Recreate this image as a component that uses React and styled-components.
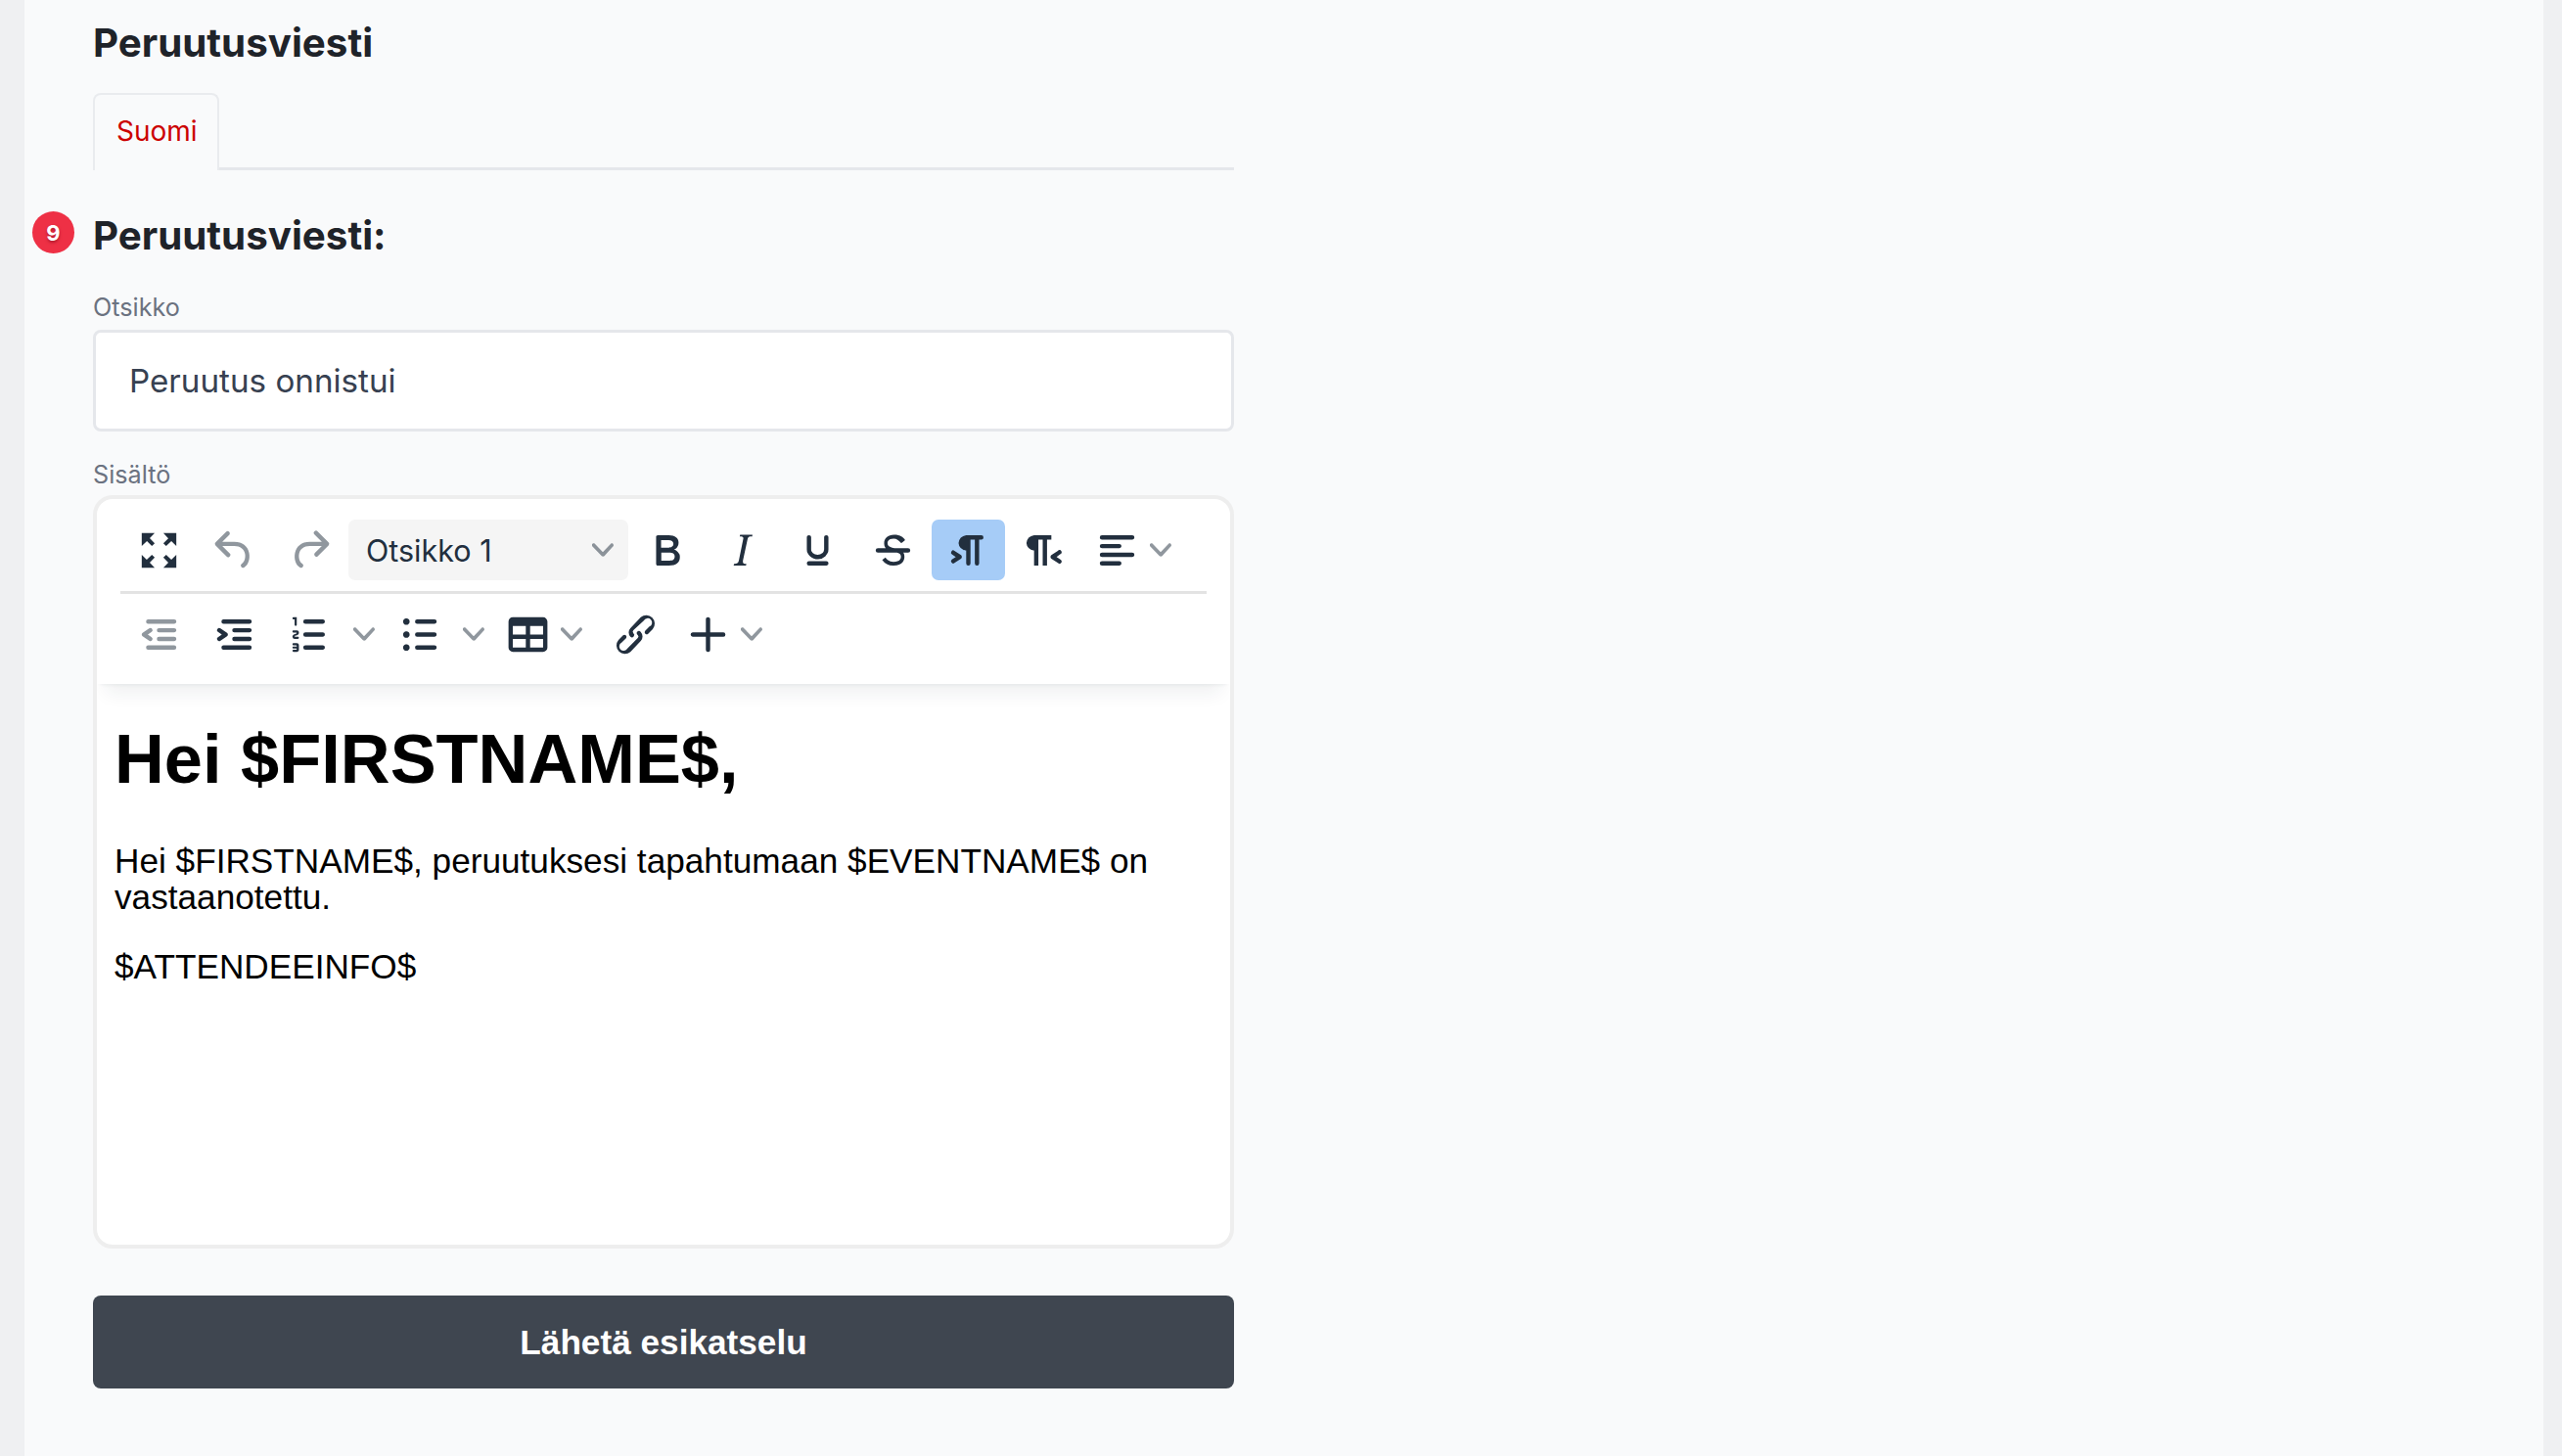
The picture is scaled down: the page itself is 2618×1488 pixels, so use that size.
import React from "react";
import styled, { createGlobalStyle } from "styled-components";

const icons = {
  fullscreen:
    "M15.3 10l-1.3-1.3 2.3-2.3L14 4h6v6l-2.3-2.3-2.4 2.3zm-6.6 0L6.4 7.7 4 10V4h6L7.7 6.3 10 8.7 8.7 10zm6.6 4l2.4 2.3L20 14v6h-6l2.3-2.3-2.3-2.4 1.3-1.3zm-6.6 0L10 15.3l-2.3 2.4L10 20H4v-6l2.3 2.3L8.7 14z",
  undo: "M6.4 8H12c3.7 0 6.2 2 6.8 5.1.6 2.7-.4 5.6-2.3 6.8a1 1 0 0 1-1-1.8c1.1-.6 1.8-2.7 1.4-4.6-.5-2.1-2.1-3.5-4.9-3.5H6.4l3.3 3.3a1 1 0 1 1-1.4 1.4l-5-5a1 1 0 0 1 0-1.4l5-5a1 1 0 0 1 1.4 1.4L6.4 8z",
  redo: "M17.6 10H12c-2.8 0-4.4 1.4-4.9 3.5-.4 2 .3 4 1.4 4.6a1 1 0 1 1-1 1.8c-2-1.2-2.9-4.1-2.3-6.8.6-3 3-5.1 6.8-5.1h5.6l-3.3-3.3a1 1 0 1 1 1.4-1.4l5 5a1 1 0 0 1 0 1.4l-5 5a1 1 0 0 1-1.4-1.4l3.3-3.3z",
  bold: "M7.8 19c-.3 0-.5 0-.6-.2l-.2-.5V5.7c0-.2 0-.4.2-.5l.6-.2h5c1.5 0 2.7.3 3.5 1 .7.6 1.1 1.4 1.1 2.5a3 3 0 0 1-.6 1.9c-.4.6-1 1-1.6 1.2.4.1.9.3 1.3.6s.8.7 1 1.2c.4.4.5 1 .5 1.6 0 1.3-.4 2.3-1.3 3-.8.7-2.1 1-3.8 1H7.8zm5-8.3c.6 0 1.2-.1 1.6-.5.4-.3.6-.7.6-1.3 0-1.1-.8-1.7-2.3-1.7H9.3v3.5h3.4zm.5 6c.7 0 1.3-.1 1.7-.4.4-.4.6-.9.6-1.5s-.2-1-.7-1.4c-.4-.3-1-.4-2-.4H9.4v3.8h4z",
  italic:
    "M16.7 4.7l-.1.9h-.3c-.6 0-1 0-1.4.3-.3.3-.4.6-.5 1.1l-2.1 9.8v.6c0 .5.4.8 1.4.8h.2l-.2.8H8l.2-.8h.2c1.1 0 1.8-.5 2-1.5l2-9.8.1-.5c0-.6-.4-.8-1.4-.8h-.3l.2-.9h5.8z",
  underline:
    "M16 5c.6 0 1 .4 1 1v5.5a4 4 0 0 1-.4 1.8l-1 1.4a5.3 5.3 0 0 1-5.5 1 5 5 0 0 1-1.6-1c-.5-.4-.8-.9-1.1-1.4a4 4 0 0 1-.4-1.8V6c0-.6.4-1 1-1s1 .4 1 1v5.5c0 .3 0 .6.2 1l.6.7a3.3 3.3 0 0 0 2.2.8 3.4 3.4 0 0 0 2.2-.8c.3-.2.4-.5.6-.8l.2-.9V6c0-.6.4-1 1-1zM8 17h8c.6 0 1 .4 1 1s-.4 1-1 1H8a1 1 0 0 1 0-2z",
  strike:
    "M15.6 8.5c-.5-.7-1-1.1-1.3-1.3-.6-.4-1.3-.6-2-.6-2.7 0-2.8 1.7-2.8 2.1 0 1.6 1.8 2 3.2 2.3 4.4.9 4.6 2.8 4.6 3.9 0 1.4-.7 4.1-5 4.1A6.2 6.2 0 0 1 7 16.4l1.5-1.1c.4.6 1.6 2 3.7 2 1.6 0 2.5-.4 3-1 .3-.4.5-.9.5-1.4 0-.9-.4-1.7-3.2-2.2-2-.4-4.6-1-4.6-4 0-2.3 1.7-3.9 4.6-3.9 1.5 0 2.6.3 3.4.8.8.5 1.3 1 1.7 1.6l-1.5 1.3zM5 11h14a1 1 0 0 1 0 2H5a1 1 0 0 1 0-2z",
  ltr: "M11 5h7a1 1 0 0 1 0 2h-1v11a1 1 0 0 1-2 0V7h-2v11a1 1 0 0 1-2 0v-6c-.5 0-1 0-1.4-.3A3.4 3.4 0 0 1 7.8 10a3.3 3.3 0 0 1 0-2.8 3.4 3.4 0 0 1 1.8-1.8L11 5zM4.4 16.2L6.2 15l-1.8-1.2a1 1 0 0 1 1.2-1.6l3 2a1 1 0 0 1 0 1.6l-3 2a1 1 0 1 1-1.2-1.6z",
  rtl: "M8 5h8v2h-2v12h-2V7h-2v12H8v-7c-.5 0-1 0-1.4-.3A3.4 3.4 0 0 1 4.8 10a3.3 3.3 0 0 1 0-2.8 3.4 3.4 0 0 1 1.8-1.8L8 5zm12 11.2a1 1 0 1 1-1 1.6l-3-2a1 1 0 0 1 0-1.6l3-2a1 1 0 1 1 1 1.6L18.4 15l1.8 1.2z",
  alignLeft:
    "M5 5h14c.6 0 1 .4 1 1s-.4 1-1 1H5a1 1 0 1 1 0-2zm0 4h8c.6 0 1 .4 1 1s-.4 1-1 1H5a1 1 0 1 1 0-2zm0 8h8c.6 0 1 .4 1 1s-.4 1-1 1H5a1 1 0 0 1 0-2zm0-4h14c.6 0 1 .4 1 1s-.4 1-1 1H5a1 1 0 0 1 0-2z",
  outdent:
    "M7 5h12c.6 0 1 .4 1 1s-.4 1-1 1H7a1 1 0 1 1 0-2zm5 4h7c.6 0 1 .4 1 1s-.4 1-1 1h-7a1 1 0 0 1 0-2zm0 4h7c.6 0 1 .4 1 1s-.4 1-1 1h-7a1 1 0 0 1 0-2zm-5 4h12a1 1 0 0 1 0 2H7a1 1 0 0 1 0-2zm1.6-3.8a1 1 0 0 1-1.2 1.6l-3-2a1 1 0 0 1 0-1.6l3-2a1 1 0 0 1 1.2 1.6L6.8 12l1.8 1.2z",
  indent:
    "M7 5h12c.6 0 1 .4 1 1s-.4 1-1 1H7a1 1 0 1 1 0-2zm5 4h7c.6 0 1 .4 1 1s-.4 1-1 1h-7a1 1 0 0 1 0-2zm0 4h7c.6 0 1 .4 1 1s-.4 1-1 1h-7a1 1 0 0 1 0-2zm-5 4h12a1 1 0 0 1 0 2H7a1 1 0 0 1 0-2zm-2.6-3.8L6.2 12l-1.8-1.2a1 1 0 0 1 1.2-1.6l3 2a1 1 0 0 1 0 1.6l-3 2a1 1 0 1 1-1.2-1.6z",
  numlist:
    "M10 17h8c.6 0 1 .4 1 1s-.4 1-1 1h-8a1 1 0 0 1 0-2zm0-6h8c.6 0 1 .4 1 1s-.4 1-1 1h-8a1 1 0 0 1 0-2zm0-6h8c.6 0 1 .4 1 1s-.4 1-1 1h-8a1 1 0 1 1 0-2zM6 4v3.5c0 .3-.2.5-.5.5a.5.5 0 0 1-.5-.5V5h-.5a.5.5 0 0 1 0-1H6zm-1 8.8l.2.2h1.3c.3 0 .5.2.5.5s-.2.5-.5.5H4.9a1 1 0 0 1-.9-1V13c0-.4.3-.8.6-1l1.2-.4.2-.3a.2.2 0 0 0-.2-.2H4.5a.5.5 0 0 1-.5-.5c0-.3.2-.5.5-.5h1.6c.5 0 .9.4.9 1v.1c0 .4-.3.8-.6 1l-1.2.4-.2.3zM7 17v2c0 .6-.4 1-1 1H4.5a.5.5 0 0 1 0-1h1.2c.2 0 .3-.1.3-.3 0-.2-.1-.3-.3-.3H4.4a.4.4 0 1 1 0-.8h1.3c.2 0 .3-.1.3-.3 0-.2-.1-.3-.3-.3H4.5a.5.5 0 1 1 0-1H6c.6 0 1 .4 1 1z",
  bullist:
    "M11 5h8c.6 0 1 .4 1 1s-.4 1-1 1h-8a1 1 0 0 1 0-2zm0 6h8c.6 0 1 .4 1 1s-.4 1-1 1h-8a1 1 0 0 1 0-2zm0 6h8c.6 0 1 .4 1 1s-.4 1-1 1h-8a1 1 0 0 1 0-2zM4.5 6c0-.4.1-.8.4-1 .3-.4.7-.5 1.1-.5.4 0 .8.1 1 .4.4.3.5.7.5 1.1 0 .4-.1.8-.4 1-.3.4-.7.5-1.1.5-.4 0-.8-.1-1-.4-.4-.3-.5-.7-.5-1.1zm0 6c0-.4.1-.8.4-1 .3-.4.7-.5 1.1-.5.4 0 .8.1 1 .4.4.3.5.7.5 1.1 0 .4-.1.8-.4 1-.3.4-.7.5-1.1.5-.4 0-.8-.1-1-.4-.4-.3-.5-.7-.5-1.1zm0 6c0-.4.1-.8.4-1 .3-.4.7-.5 1.1-.5.4 0 .8.1 1 .4.4.3.5.7.5 1.1 0 .4-.1.8-.4 1-.3.4-.7.5-1.1.5-.4 0-.8-.1-1-.4-.4-.3-.5-.7-.5-1.1z",
  table:
    "M19 4a2 2 0 0 1 2 2v12a2 2 0 0 1-2 2H5a2 2 0 0 1-2-2V6c0-1.1.9-2 2-2h14zM5 14v4h6v-4H5zm14 0h-6v4h6v-4zm0-6h-6v4h6V8zM5 12h6V8H5v4z",
  link: "M6.2 12.3a1 1 0 0 1 1.4 1.4l-2.1 2a2 2 0 1 0 2.7 2.7l4.8-4.8a1 1 0 0 0 0-1.4 1 1 0 1 1 1.4-1.3 2.9 2.9 0 0 1 0 4L9.6 20a3.9 3.9 0 0 1-5.5-5.5l2-2zm11.6-.6a1 1 0 0 1-1.4-1.4l2-2a2 2 0 1 0-2.6-2.7L11 10a1 1 0 0 0 0 1.4A1 1 0 1 1 9.6 13a2.9 2.9 0 0 1 0-4L14.4 4a3.9 3.9 0 0 1 5.5 5.5l-2 2z",
  plus: "M12 4c.5 0 1 .4 1 .9V11h6a1 1 0 0 1 .1 2H13v6a1 1 0 0 1-2 .1V13H5a1 1 0 0 1-.1-2H11V5c0-.6.4-1 1-1z",
};

const Icon = ({ name, muted }) => (
  <IconSvg viewBox="0 0 24 24" $muted={muted}>
    <path d={icons[name]} />
  </IconSvg>
);

const Chevron = () => (
  <ChevronSvg viewBox="0 0 10 10">
    <path d="M8.7 2.2c.3-.3.8-.3 1 0 .4.4.4.9 0 1.2L5.7 7.8c-.3.3-.9.3-1.2 0L.2 3.4a.8.8 0 0 1 0-1.2c.3-.3.8-.3 1.1 0L5 6l3.7-3.8z" />
  </ChevronSvg>
);

const App = () => {
  return (
    <>
      <GlobalStyle />
      <Panel>
        <Content>
          <PageTitle>Peruutusviesti</PageTitle>
          <Tabs>
            <Tab>Suomi</Tab>
          </Tabs>
          <SectionHeading>
            <Badge>9</Badge>
            Peruutusviesti:
          </SectionHeading>
          <FieldLabel>Otsikko</FieldLabel>
          <TextInput>Peruutus onnistui</TextInput>
          <EditorLabel>Sisältö</EditorLabel>
          <Editor>
            <Toolbar>
              <ToolRowTop>
                <ToolButton><Icon name="fullscreen" /></ToolButton>
                <ToolButton><Icon name="undo" muted /></ToolButton>
                <ToolButton><Icon name="redo" muted /></ToolButton>
                <FormatSelect>
                  Otsikko 1
                  <Chevron />
                </FormatSelect>
                <ToolButton><Icon name="bold" /></ToolButton>
                <ToolButton><Icon name="italic" /></ToolButton>
                <ToolButton><Icon name="underline" /></ToolButton>
                <ToolButton><Icon name="strike" /></ToolButton>
                <ToolButton $active $gap={1}><Icon name="ltr" /></ToolButton>
                <ToolButton><Icon name="rtl" /></ToolButton>
                <MenuButton>
                  <Icon name="alignLeft" />
                  <ChevronSlot><Chevron /></ChevronSlot>
                </MenuButton>
              </ToolRowTop>
              <ToolRow>
                <ToolButton><Icon name="outdent" muted /></ToolButton>
                <ToolButton><Icon name="indent" /></ToolButton>
                <SplitButton $width={112}>
                  <ToolButton><Icon name="numlist" /></ToolButton>
                  <ChevronSlot><Chevron /></ChevronSlot>
                </SplitButton>
                <SplitButton $width={112}>
                  <ToolButton><Icon name="bullist" /></ToolButton>
                  <ChevronSlot><Chevron /></ChevronSlot>
                </SplitButton>
                <MenuButton>
                  <Icon name="table" />
                  <ChevronSlot><Chevron /></ChevronSlot>
                </MenuButton>
                <ToolButton $gap={0}><Icon name="link" /></ToolButton>
                <MenuButton>
                  <Icon name="plus" />
                  <ChevronSlot><Chevron /></ChevronSlot>
                </MenuButton>
              </ToolRow>
            </Toolbar>
            <EditorBody>
              <h1>Hei $FIRSTNAME$,</h1>
              <p>Hei $FIRSTNAME$, peruutuksesi tapahtumaan $EVENTNAME$ on vastaanotettu.</p>
              <p>$ATTENDEEINFO$</p>
            </EditorBody>
          </Editor>
          <PreviewButton>Lähetä esikatselu</PreviewButton>
        </Content>
      </Panel>
    </>
  );
};

//styled component
const GlobalStyle = createGlobalStyle`
  html, body {
    margin: 0;
    height: 100%;
    overflow: hidden;
    background: #eff0f2;
  }
`;
const Panel = styled.main`
  margin: 0 19px 0 25px;
  height: 1488px;
  padding-left: 70px;
  background: #f9fafb;
  font-family: Inter, "Liberation Sans", sans-serif;
`;
const Content = styled.div`
  width: 1166px;
`;
const PageTitle = styled.h2`
  margin: 0;
  padding-top: 20px;
  font-size: 40.3px;
  line-height: 48px;
  font-weight: 700;
  color: #1f2329;
`;
const Tabs = styled.div`
  display: flex;
  margin-top: 27px;
  border-bottom: 3px solid #e5e7eb;
`;
const Tab = styled.div`
  margin-bottom: -3px;
  padding: 0 20px 3px 22px;
  height: 74px;
  display: flex;
  align-items: center;
  border: 2px solid #e9ebee;
  border-bottom: none;
  border-radius: 8px 8px 0 0;
  background: #f9fafb;
  color: #cc0000;
  font-size: 28px;
  line-height: 28px;
`;
const SectionHeading = styled.h3`
  position: relative;
  margin: 43px 0 0;
  font-size: 40.3px;
  line-height: 48px;
  font-weight: 700;
  color: #1f2329;
`;
const Badge = styled.span`
  position: absolute;
  left: -62px;
  top: -1px;
  width: 43px;
  height: 43px;
  border-radius: 50%;
  display: flex;
  align-items: center;
  justify-content: center;
  background: #ee3045;
  color: #fff;
  font-size: 22px;
  font-weight: 700;
  text-shadow: 0 2px 3px rgba(120, 0, 20, 0.5);
`;
const FieldLabel = styled.div`
  margin-top: 33px;
  font-size: 25.2px;
  line-height: 32px;
  color: #6b7280;
`;
const EditorLabel = styled(FieldLabel)`
  margin-top: 28px;
`;
const TextInput = styled.div`
  margin-top: 7px;
  height: 104px;
  box-sizing: border-box;
  padding-left: 34px;
  display: flex;
  align-items: center;
  border: 3px solid #e5e7eb;
  border-radius: 8px;
  background: #fff;
  color: #374151;
  font-size: 33.2px;
`;
const Editor = styled.div`
  margin-top: 5px;
  height: 770px;
  box-sizing: border-box;
  display: flex;
  flex-direction: column;
  border: 4px solid #eeeeee;
  border-radius: 20px;
  background: #fff;
  overflow: hidden;
`;
const Toolbar = styled.div`
  padding: 21px 24px 20px;
  box-shadow: 0 4px 4px -4px rgba(34, 47, 62, 0.1), 0 18px 18px -9px rgba(34, 47, 62, 0.07);
  position: relative;
`;
const ToolRow = styled.div`
  display: flex;
  align-items: center;
  padding-left: 2px;
`;
const ToolRowTop = styled(ToolRow)`
  padding-bottom: 11px;
  margin-bottom: 10px;
  border-bottom: 3px solid #e3e3e3;
`;
const ToolButton = styled.div`
  flex: none;
  width: 75px;
  height: 62px;
  margin-right: ${(p) => (p.$gap !== undefined ? p.$gap : 2)}px;
  display: flex;
  align-items: center;
  justify-content: center;
  border-radius: 7px;
  background: ${(p) => (p.$active ? "#a6ccf7" : "transparent")};
`;
const IconSvg = styled.svg`
  width: 53px;
  height: 53px;
  fill: ${(p) => (p.$muted ? "rgba(34, 47, 62, 0.5)" : "#222f3e")};
`;
const ChevronSvg = styled.svg`
  width: 22px;
  height: 22px;
  fill: rgba(34, 47, 62, 0.5);
`;
const FormatSelect = styled.div`
  flex: none;
  width: 286px;
  height: 62px;
  margin-right: 2px;
  box-sizing: border-box;
  padding: 0 15px 0 18px;
  display: flex;
  align-items: center;
  justify-content: space-between;
  border-radius: 7px;
  background: #f5f5f5;
  color: #222f3e;
  font-size: 30.5px;
`;
const ChevronSlot = styled.div`
  flex: none;
  width: 36px;
  display: flex;
  justify-content: center;
`;
const SplitButton = styled.div`
  flex: none;
  width: ${(p) => p.$width}px;
  display: flex;
  align-items: center;
  ${ToolButton} {
    margin-right: 0;
  }
`;
const MenuButton = styled.div`
  flex: none;
  width: 107px;
  height: 62px;
  margin-right: 2px;
  box-sizing: border-box;
  padding-left: 10px;
  display: flex;
  align-items: center;
`;
const EditorBody = styled.div`
  flex: 1;
  padding: 0 17px 0 18px;
  color: #000;
  font-family: "Liberation Sans", Arial, sans-serif;
  font-size: 35.2px;
  line-height: 36.5px;
  h1 {
    margin: 39px 0 48px;
    font-size: 70.4px;
    line-height: 76px;
    font-weight: 700;
  }
  p {
    margin: 35px 0 0;
  }
  h1 + p {
    margin-top: 0;
  }
`;
const PreviewButton = styled.button`
  display: block;
  width: 100%;
  height: 95px;
  margin-top: 48px;
  border: none;
  border-radius: 8px;
  background: #3f4650;
  color: #fff;
  font-family: "Liberation Sans", Arial, sans-serif;
  font-size: 35.2px;
  font-weight: 700;
`;

export default App;
